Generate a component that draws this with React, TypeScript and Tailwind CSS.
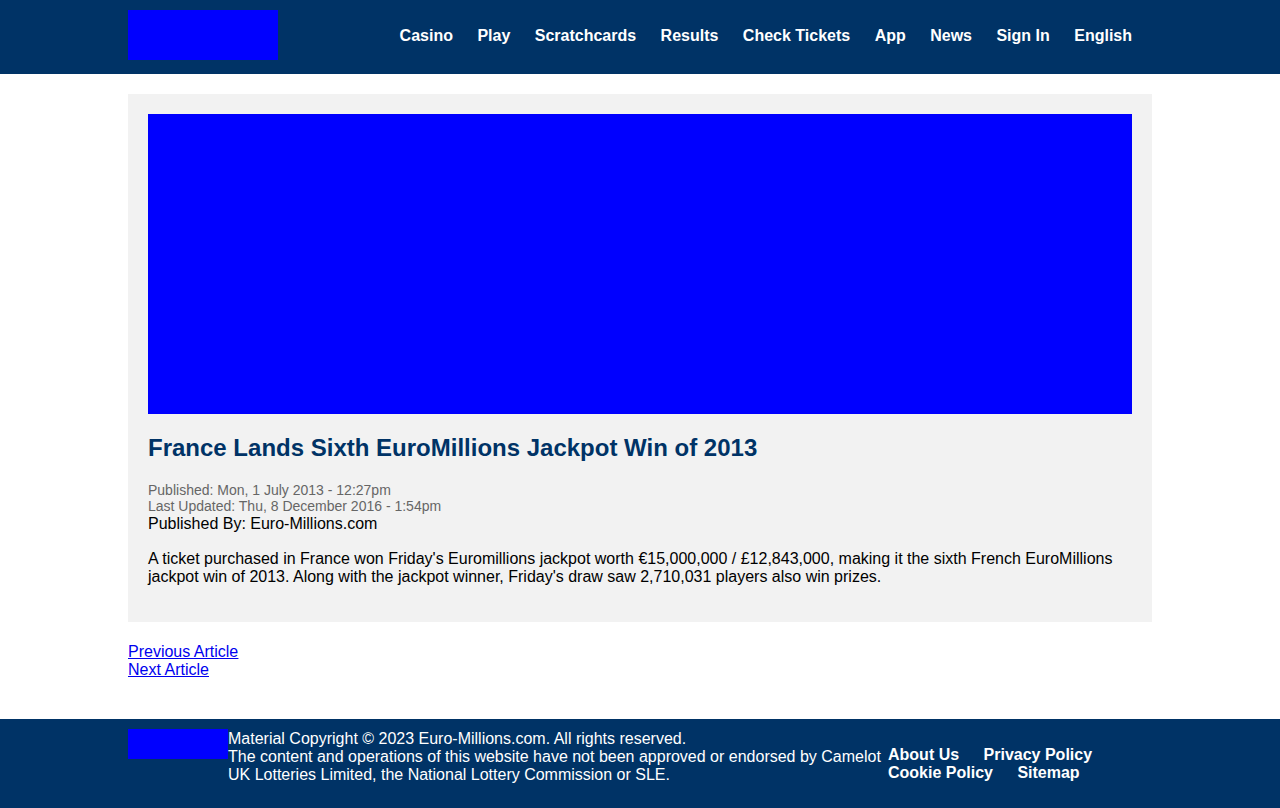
const navItems = ['Casino', 'Play', 'Scratchcards', 'Results', 'Check Tickets', 'App', 'News', 'Sign In', 'English'];
const footerItems = ['About Us', 'Privacy Policy', 'Cookie Policy', 'Sitemap'];

function Links({ items }: { items: string[] }) {
  return (
    <>
      {items.map((item) => (
        <span key={item}>
          <a href="#" className="mr-5 inline-block font-bold text-white">
            {item}
          </a>{' '}
        </span>
      ))}
    </>
  );
}

export default function App() {
  return (
    <div className="bg-white font-['Liberation_Sans',Arial,sans-serif] text-base leading-[18px] text-black">
      <header className="bg-[#003366] pt-2.5 pb-3.5">
        <div className="mx-auto flex w-4/5 items-center justify-between">
          <div role="img" aria-label="Euro-Millions.com" className="h-[50px] w-[150px] bg-[#0000ff]" />
          <nav aria-label="Main" className="pt-0.5">
            <Links items={navItems} />
          </nav>
        </div>
      </header>

      <main className="mx-auto w-4/5 pt-5 pb-10">
        <article className="bg-[#f2f2f2] p-5 pb-9">
          <div role="img" aria-label="Article banner" className="h-[300px] bg-[#0000ff]" />
          <h1 className="mt-5 text-2xl leading-7 font-bold text-[#003366]">
            France Lands Sixth EuroMillions Jackpot Win of 2013
          </h1>
          <div className="mt-5 text-sm leading-4 text-[#666666]">
            <p>Published: Mon, 1 July 2013 - 12:27pm</p>
            <p>Last Updated: Thu, 8 December 2016 - 1:54pm</p>
          </div>
          <p className="leading-5">Published By: Euro-Millions.com</p>
          <p className="mt-4">
            A ticket purchased in France won Friday's Euromillions jackpot worth €15,000,000 / £12,843,000, making it
            the sixth French EuroMillions jackpot win of 2013. Along with the jackpot winner, Friday's draw saw
            2,710,031 players also win prizes.
          </p>
        </article>
        <nav aria-label="Articles" className="mt-[21px] flex flex-col items-start text-[#0000ee] underline">
          <a href="#">Previous Article</a>
          <a href="#">Next Article</a>
        </nav>
      </main>

      <footer className="bg-[#003366] pt-2.5 pb-6 text-white">
        <div className="mx-auto flex w-4/5 items-start">
          <div role="img" aria-label="Euro-Millions.com" className="h-[30px] w-[100px] shrink-0 bg-[#0000ff]" />
          <div className="w-[660px] pt-px">
            <p>Material Copyright © 2023 Euro-Millions.com. All rights reserved.</p>
            <p>
              The content and operations of this website have not been approved or endorsed by Camelot UK Lotteries
              Limited, the National Lottery Commission or SLE.
            </p>
          </div>
          <nav aria-label="Footer" className="flex-1 pt-[17px]">
            <Links items={footerItems} />
          </nav>
        </div>
      </footer>
    </div>
  );
}
